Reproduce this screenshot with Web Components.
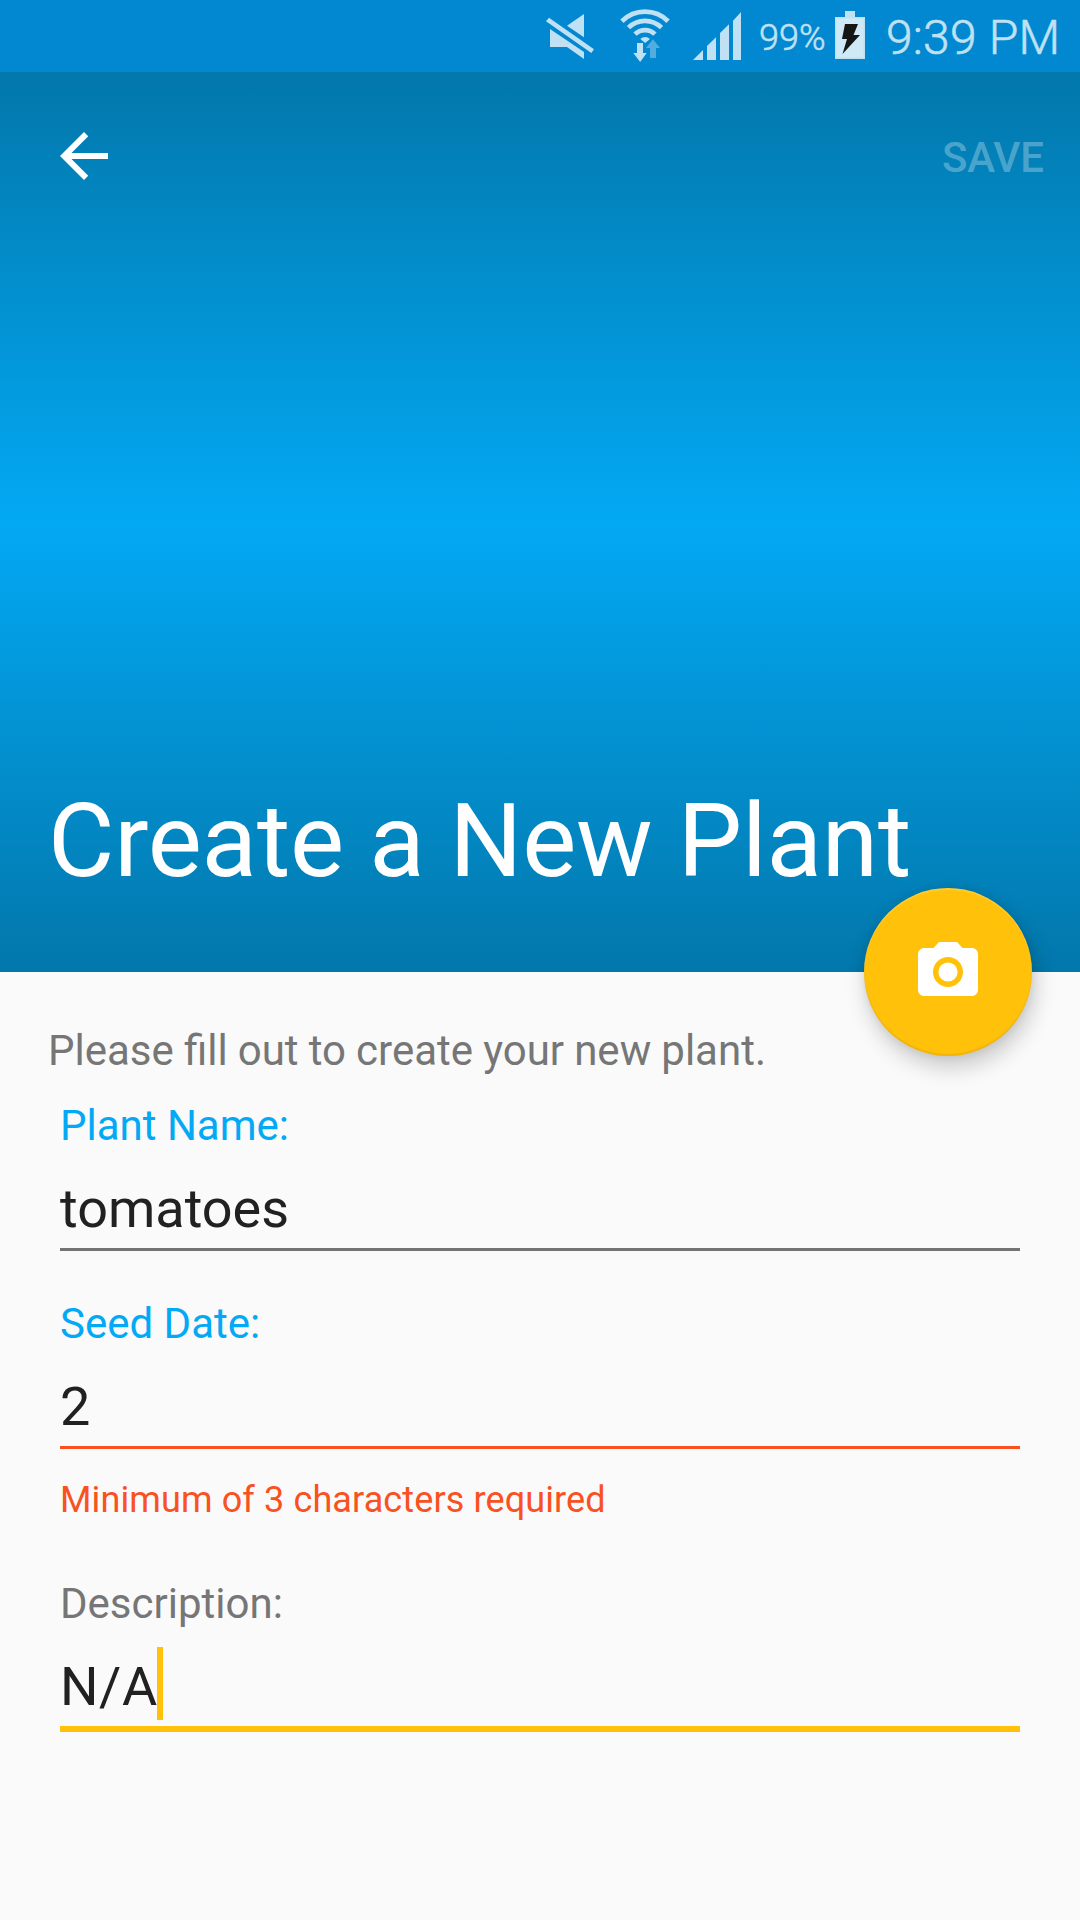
<!DOCTYPE html>
<html lang="en">
<head>
<meta charset="utf-8">
<title>Create a New Plant</title>
<style>
  html, body { margin: 0; }
  body { width: 1080px; height: 1920px; overflow: hidden; background: #fafafa; font-family: Roboto, "Liberation Sans", sans-serif; }
</style>
</head>
<body>
<plant-screen></plant-screen>
<script>
const define = (name, html) => customElements.define(name, class extends HTMLElement {
  constructor() {
    super();
    this.attachShadow({ mode: 'open' }).innerHTML = html;
  }
});

define('status-bar', `
  <style>
    :host { display: flex; height: 72px; background: #0288d1; color: #bfe1f3; justify-content: flex-end; align-items: flex-start; box-sizing: border-box; padding-right: 20px; font-weight: 300; white-space: nowrap; -webkit-text-stroke: .6px #bfe1f3; }
    svg { display: block; fill: currentColor; flex: none; }
    .mute { margin: 12px 26px 0 0; }
    .wifi { margin: 8px 23px 0 0; }
    .signal { margin: 12px 18px 0 0; }
    .level { font-size: 36px; line-height: 42px; width: 67px; margin: 17px 9px 0 0; }
    .battery { margin: 11px 21px 0 0; }
    .time { font-size: 48px; line-height: 57px; width: 174px; margin-top: 9px; letter-spacing: .2px; }
  </style>
  <svg class="mute" width="48" height="48" viewBox="48 36 144 144">
    <path d="M111 77 162 42V112ZM60 87 162 156V177L111 141H60Z"/>
    <path stroke="#0288d1" stroke-width="10" paint-order="stroke" d="M57 53 192 148 184 159 48 64Z"/>
  </svg>
  <svg class="wifi" width="50" height="55" viewBox="270 24 150 165">
    <g fill="none" stroke="currentColor" stroke-width="14">
      <path d="M275.7 63.700A98 98 0 0 1 414.3 63.700M295.5 83A70 70 0 0 1 394.5 83M315 102.5A43 43 0 0 1 375 102.5"/>
    </g>
    <path d="M331 117A21 21 0 0 1 360 117L345.500 129ZM321 129H339V159H350L330.500 186 310 159H321Z"/>
    <path opacity=".42" d="M369 118 390 144H378V174H360V144H348Z"/>
  </svg>
  <svg class="signal" width="48" height="48" viewBox="489 36 144 144">
    <path d="M489 180 519 150V180ZM531 138 558 112V180H531ZM570 99 597 73V180H570ZM609 62 633 36V180H609Z"/>
  </svg>
  <span class="level">99%</span>
  <svg class="battery" width="30" height="48" viewBox="0 0 30 48">
    <path d="M10 0H20V6H30V48H0V6H10Z"/>
    <path fill="#d0e9f6" d="M1.500 7.500H28.500V46.500H1.500Z"/>
    <path fill="#161616" d="M10 13H23L18.500 24H25L7.500 43 12 28H7Z"/>
  </svg>
  <span class="time">9:39 PM</span>
`);

define('plant-header', `
  <style>
    :host { display: flex; flex-direction: column; justify-content: space-between; position: relative; height: 900px; box-sizing: border-box; padding: 48px 36px 71px 48px; color: #fff; background: linear-gradient(#0277ab, #03a9f4 50%, #0277ab); }
    nav { display: flex; justify-content: space-between; align-items: flex-start; }
    svg { display: block; fill: #fff; }
    .save { font-size: 42px; line-height: 49px; font-weight: 500; margin-top: 13px; letter-spacing: -.1px; color: rgba(255,255,255,.3); }
    h1 { margin: 0; font-size: 102px; line-height: 120px; font-weight: 400; letter-spacing: -.17px; white-space: nowrap; }
  </style>
  <nav>
    <svg width="72" height="72" viewBox="0 0 24 24"><path d="M20 11H7.830l5.590-5.590L12 4l-8 8 8 8 1.410-1.410L7.830 13H20v-2z"/></svg>
    <span class="save">SAVE</span>
  </nav>
  <h1><slot></slot></h1>
  <slot name="fab"></slot>
`);

define('camera-fab', `
  <style>
    :host { position: absolute; right: 48px; bottom: -84px; width: 168px; height: 168px; border-radius: 50%; background: #ffc10a; display: flex; align-items: center; justify-content: center; box-shadow: 0 0 9px rgba(0,0,0,.07), 3px 11px 22px rgba(0,0,0,.2), inset 0 -2px 1px rgba(180,120,0,.18), inset 0 2px 1px rgba(255,255,255,.16); letter-spacing: 0; }
    svg { display: block; fill: #fff; }
  </style>
  <svg width="72" height="72" viewBox="0 0 24 24"><circle cx="12" cy="12" r="3.200"/><path d="M9 2L7.170 4H4c-1.100 0-2 .9-2 2v12c0 1.100.9 2 2 2h16c1.100 0 2-.9 2-2V6c0-1.100-.9-2-2-2h-3.170L15 2H9zm3 15c-2.760 0-5-2.240-5-5s2.240-5 5-5 5 2.240 5 5-2.240 5-5 5z"/></svg>
`);

define('text-field', `
  <style>
    :host { display: block; --label: #03a9f4; --line: #737373; }
    :host([state="error"]) { --line: #f9511f; }
    :host([state="focus"]) { --label: #767676; --line: #ffc10a; }
    .label { font-size: 42px; line-height: 49px; color: var(--label); }
    .value { display: flex; align-items: flex-start; height: 98px; box-sizing: border-box; margin-top: 3px; padding-top: 24px; font-size: 54px; line-height: 63px; color: #212121; border-bottom: 3px solid var(--line); }
    :host([state="focus"]) .value { height: 101px; border-bottom-width: 6px; letter-spacing: .6px; }
    .caret { display: none; width: 6px; height: 73px; margin: -8px 0 0 -1px; background: #ffc10a; }
    :host([state="focus"]) .caret { display: block; }
    ::slotted([slot="error"]) { display: block; margin-top: 30px; font-size: 36px; line-height: 42px; letter-spacing: .12px; color: #f9511f; }
  </style>
  <div class="label"><slot name="label"></slot></div>
  <div class="value"><span><slot></slot></span><i class="caret"></i></div>
  <slot name="error"></slot>
`);

define('plant-form', `
  <style>
    :host { display: flex; flex-direction: column; padding: 54px 60px 0; }
    p { margin: 0 0 26px -12px; font-size: 42px; line-height: 49px; word-spacing: -.3px; color: #767676; }
    .fields { display: flex; flex-direction: column; }
  </style>
  <p><slot name="hint"></slot></p>
  <div class="fields"><slot></slot></div>
`);

define('plant-screen', `
  <style>
    :host { display: flex; flex-direction: column; width: 1080px; height: 1920px; background: #fafafa; }
    .name { margin-bottom: 48px; }
    .date { margin-bottom: 58px; }
  </style>
  <status-bar></status-bar>
  <plant-header>Create a New Plant<camera-fab slot="fab"></camera-fab></plant-header>
  <plant-form>
    <span slot="hint">Please fill out to create your new plant.</span>
    <text-field class="name"><span slot="label">Plant Name:</span>tomatoes</text-field>
    <text-field class="date" state="error"><span slot="label">Seed Date:</span>2<span slot="error">Minimum of 3 characters required</span></text-field>
    <text-field state="focus"><span slot="label">Description:</span>N/A</text-field>
  </plant-form>
`);
</script>
</body>
</html>
